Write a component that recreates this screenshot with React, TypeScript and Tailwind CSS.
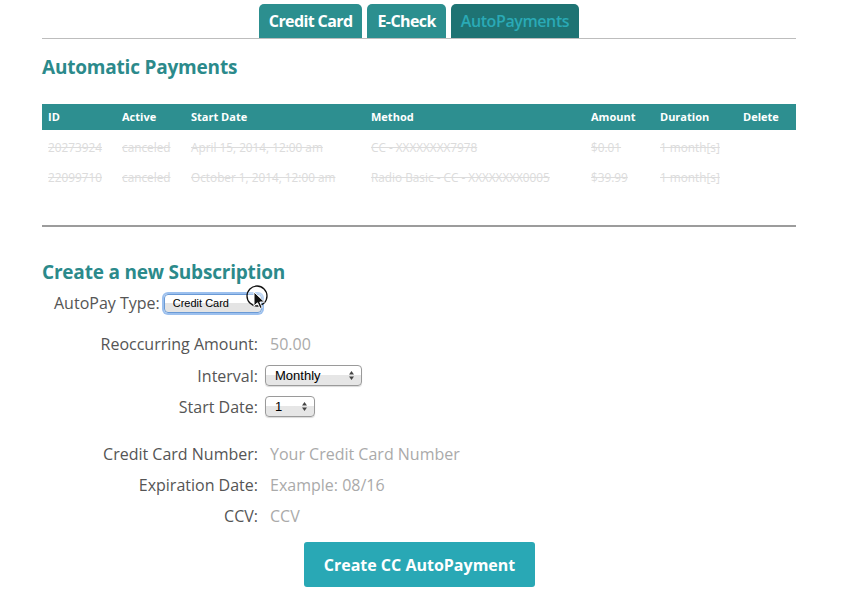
import React from "react";

const rows = [
  ["20273924", "canceled", "April 15, 2014, 12:00 am", "CC - XXXXXXXX7978", "$0.01", "1 month[s]"],
  ["22099710", "canceled", "October 1, 2014, 12:00 am", "Radio Basic - CC - XXXXXXXX0005", "$39.99", "1 month[s]"],
];

function Arrows() {
  return (
    <svg width="7" height="11" viewBox="0 0 7 11" className="shrink-0">
      <path d="M3.5 1 L6 4.5 H1 Z" fill="#444" />
      <path d="M3.5 10 L6 6.5 H1 Z" fill="#444" />
    </svg>
  );
}

function MacSelect({ label, width }: { label: string; width: string }) {
  return (
    <div
      className={`${width} h-[21px] flex items-center justify-between rounded-[4px] border border-[#9a9a9a] bg-gradient-to-b from-white from-50% to-[#e6e6e6] to-50% pl-[9px] pr-[6px] text-[13px] text-black shadow-[0_1px_1px_rgba(0,0,0,0.15)]`}
      style={{ fontFamily: '"Liberation Sans", "DejaVu Sans", sans-serif' }}
    >
      <span>{label}</span>
      <Arrows />
    </div>
  );
}

export default function App() {
  const font = { fontFamily: '"Open Sans", "Noto Sans", sans-serif' };
  return (
    <div className="w-[843px] h-[597px] bg-white overflow-hidden" style={font}>
      <div className="mx-[42px] w-[754px]">
        {/* Tabs */}
        <div className="flex justify-center gap-[5px] pt-[4px] border-b border-[#bdbdbd]">
          <div className="h-[34px] px-[10px] flex items-center rounded-t-[5px] bg-[#2c8f8f] text-white font-bold text-[16px] tracking-[-0.6px]">
            Credit Card
          </div>
          <div className="h-[34px] px-[10px] flex items-center rounded-t-[5px] bg-[#2c8f8f] text-white font-bold text-[16px] tracking-[-0.6px]">
            E-Check
          </div>
          <div className="h-[34px] px-[10px] flex items-center rounded-t-[5px] bg-[#1e7373] text-[#2aaab6] font-semibold text-[16px] tracking-[-0.4px]">
            AutoPayments
          </div>
        </div>

        <h2 className="mt-[14px] text-[19px] leading-[28px] font-bold text-[#2b8a8b] tracking-[-0.2px]">
          Automatic Payments
        </h2>

        {/* Table */}
        <div className="mt-[23px]">
          <div className="grid grid-cols-[74px_69px_180px_220px_69px_83px_59px] h-[26px] items-center bg-[#2d8f90] text-white font-bold text-[11px]">
            {["ID", "Active", "Start Date", "Method", "Amount", "Duration", "Delete"].map((h) => (
              <div key={h} className="pl-[6px]">
                {h}
              </div>
            ))}
          </div>
          <div className="pt-[3px]">
            {rows.map((r) => (
              <div
                key={r[0]}
                className="grid grid-cols-[74px_69px_180px_220px_69px_83px_59px] h-[30px] items-center text-[11.8px] text-[#dcdcdc] line-through"
              >
                {r.map((c, i) => (
                  <div key={i} className="pl-[6px] whitespace-nowrap">
                    {c}
                  </div>
                ))}
                <div />
              </div>
            ))}
          </div>
        </div>

        <div className="mt-[32px] h-[2px] bg-[#9c9c9c]" />

        <h2 className="mt-[31px] text-[19px] leading-[28px] font-bold text-[#2b8a8b] tracking-[-0.2px]">
          Create a new Subscription
        </h2>

        {/* AutoPay Type */}
        <div className="relative mt-[7px] h-[20px] flex items-center pl-[12px] text-[16px] text-[#555]">
          <span className="mr-[4px]">AutoPay Type:</span>
          <div
            className="w-[98px] h-[19px] flex items-center rounded-[4px] border border-[#6a9ad6] bg-gradient-to-b from-white from-50% to-[#e4e4e4] to-50% pl-[8px] text-[11px] text-black shadow-[0_0_0_2px_#9cc0ee]"
            style={{ fontFamily: '"Liberation Sans", "DejaVu Sans", sans-serif' }}
          >
            Credit Card
          </div>
          <svg className="absolute left-[202px] top-[-9px]" width="30" height="34" viewBox="0 0 30 34">
            <circle cx="13" cy="12" r="10" fill="rgba(255,255,255,0.35)" stroke="#111" strokeWidth="1.3" />
            <path d="M10 8 L10 22 L13.5 18.8 L16 24.5 L18.2 23.5 L15.8 18 L20.5 18 Z" fill="#111" stroke="#fff" strokeWidth="1" />
          </svg>
        </div>

        {/* Form grid */}
        <div className="mt-[20px] grid grid-cols-[216px_1fr] gap-x-[7px] text-[16px] text-[#555]">
          <div className="h-[21px] flex items-center justify-end">Reoccurring Amount:</div>
          <div className="h-[21px] flex items-center pl-[5px] text-[#aaa]">50.00</div>

          <div className="mt-[11px] h-[21px] flex items-center justify-end">Interval:</div>
          <div className="mt-[11px] h-[21px] flex items-center">
            <MacSelect label="Monthly" width="w-[97px]" />
          </div>

          <div className="mt-[10px] h-[21px] flex items-center justify-end">Start Date:</div>
          <div className="mt-[10px] h-[21px] flex items-center">
            <MacSelect label="1" width="w-[50px]" />
          </div>

          <div className="mt-[26px] h-[21px] flex items-center justify-end">Credit Card Number:</div>
          <div className="mt-[26px] h-[21px] flex items-center pl-[5px] text-[#aaa]">Your Credit Card Number</div>

          <div className="mt-[10px] h-[21px] flex items-center justify-end">Expiration Date:</div>
          <div className="mt-[10px] h-[21px] flex items-center pl-[5px] text-[#aaa]">Example: 08/16</div>

          <div className="mt-[10px] h-[21px] flex items-center justify-end">CCV:</div>
          <div className="mt-[10px] h-[21px] flex items-center pl-[5px] text-[#aaa]">CCV</div>
        </div>

        <div className="mt-[16px] pl-[262px]">
          <div className="w-[231px] h-[45px] flex items-center justify-center rounded-[3px] bg-[#29a8b5] text-white font-bold text-[16px]">
            Create CC AutoPayment
          </div>
        </div>
      </div>
    </div>
  );
}
